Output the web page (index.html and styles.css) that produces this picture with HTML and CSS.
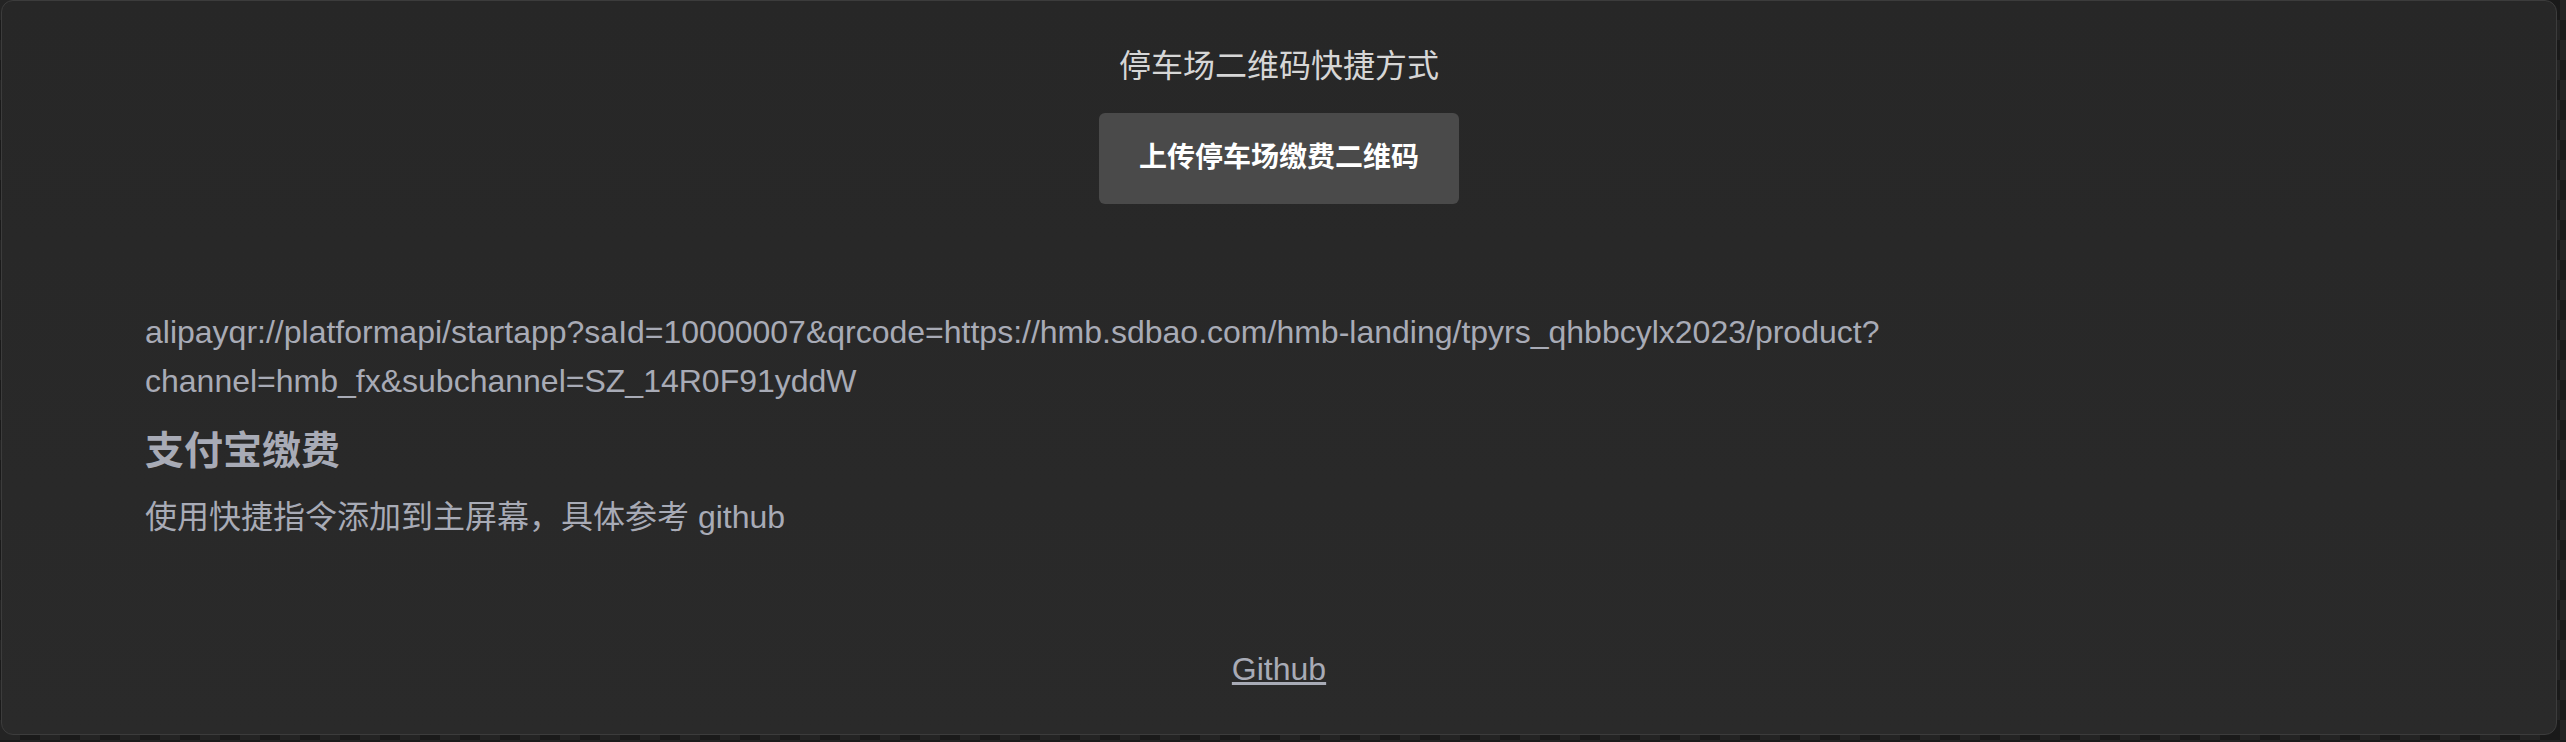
FILE: index.html
```html
<!DOCTYPE html>
<html lang="zh-CN">
<head>
<meta charset="utf-8">
<title>停车场二维码快捷方式</title>
<link rel="stylesheet" href="styles.css">
</head>
<body>
<div class="window">
  <header class="top">
    <h1 class="title">停车场二维码快捷方式</h1>
    <button class="upload" type="button">上传停车场缴费二维码</button>
  </header>
  <main class="content">
    <p class="url">alipayqr://platformapi/startapp?saId=10000007&amp;qrcode=https://hmb.sdbao.com/hmb-landing/tpyrs_qhbbcylx2023/product?channel=hmb_fx&amp;subchannel=SZ_14R0F91yddW</p>
    <h2 class="pay">支付宝缴费</h2>
    <p class="note">使用快捷指令添加到主屏幕，具体参考 github</p>
  </main>
  <footer class="foot">
    <a class="gh" href="#">Github</a>
  </footer>
</div>
</body>
</html>
```

FILE: styles.css
```css
html, body {
  margin: 0;
  padding: 0;
}
body {
  width: 2566px;
  height: 742px;
  overflow: hidden;
  background: repeating-conic-gradient(#1a1a1a 0 25%, #242424 0 50%) 0 0 / 40px 40px;
  font-family: "Liberation Sans", "Noto Sans CJK SC", sans-serif;
}
.window {
  margin: 0 0 0 1px;
  width: 2556px;
  height: 735px;
  box-sizing: border-box;
  border: 1px solid #3c3c3c;
  border-radius: 12px;
  background: linear-gradient(#272727, #2a2a2a);
  display: flex;
  flex-direction: column;
}
.top {
  display: flex;
  flex-direction: column;
  align-items: center;
  padding-top: 46px;
}
.title {
  margin: 0;
  font-size: 32px;
  line-height: 38px;
  font-weight: normal;
  color: #d6d6d6;
}
.upload {
  margin-top: 28px;
  height: 91px;
  padding: 0 40px 8px;
  border: 0;
  border-radius: 6px;
  background: #4a4a4a;
  color: #ffffff;
  font-family: "Liberation Sans", "Noto Sans CJK SC", sans-serif;
  font-size: 28px;
  font-weight: bold;
}
.content {
  padding: 0 143px;
  margin-top: 104px;
  color: #a8abb6;
}
.url {
  margin: 0;
  font-size: 32px;
  line-height: 49px;
}
.pay {
  margin: 21px 0 0;
  font-size: 39px;
  line-height: 47px;
  font-weight: bold;
}
.note {
  margin: 19px 0 0;
  font-size: 32px;
  line-height: 49px;
}
.foot {
  margin-top: 107px;
  text-align: center;
}
.gh {
  font-size: 32px;
  line-height: 40px;
  color: #a8abb6;
}
```
